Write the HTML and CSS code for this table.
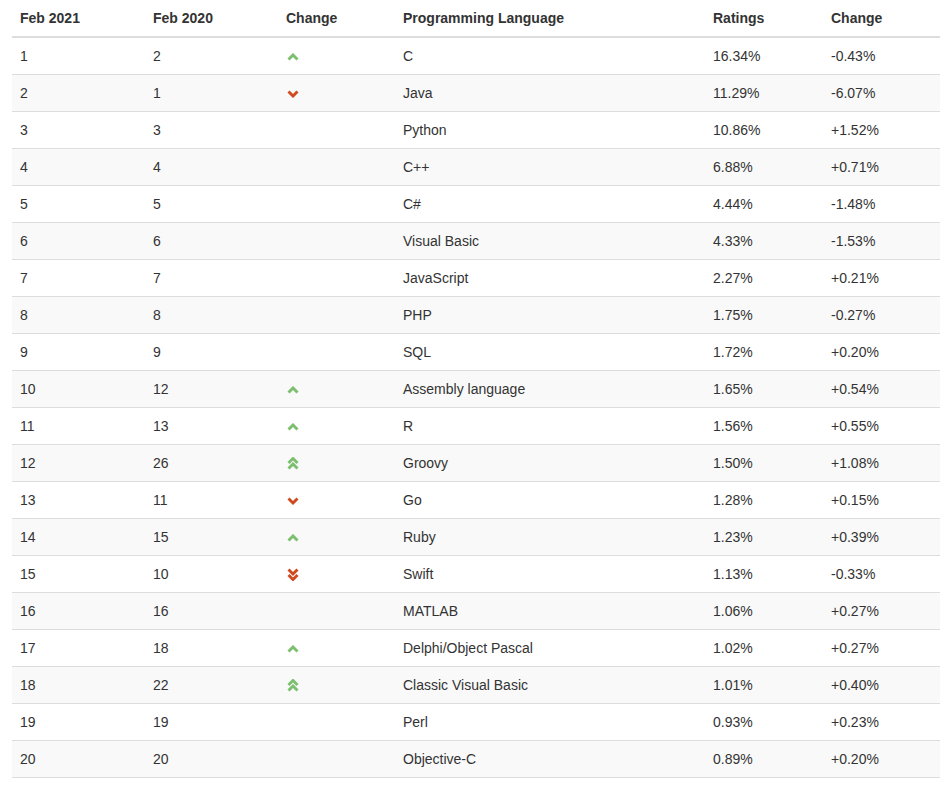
FILE: index.html
```html
<!DOCTYPE html>
<html>
<head>
<meta charset="utf-8">
<link rel="stylesheet" href="styles.css">
</head>
<body>
<div class="wrap">
<table class="rank">
<colgroup>
<col class="c1"><col class="c2"><col class="c3"><col class="c4"><col class="c5"><col class="c6">
</colgroup>
<thead>
<tr><th>Feb 2021</th><th>Feb 2020</th><th>Change</th><th>Programming Language</th><th>Ratings</th><th>Change</th></tr>
</thead>
<tbody>
<tr><td>1</td><td>2</td><td><svg class="ic up" width="12" height="8" viewBox="0 0 12 8"><polyline points="1.5,6.5 6,2 10.5,6.5"/></svg></td><td>C</td><td>16.34%</td><td>-0.43%</td></tr>
<tr><td>2</td><td>1</td><td><svg class="ic down" width="12" height="8" viewBox="0 0 12 8"><polyline points="1.5,1.5 6,6 10.5,1.5"/></svg></td><td>Java</td><td>11.29%</td><td>-6.07%</td></tr>
<tr><td>3</td><td>3</td><td></td><td>Python</td><td>10.86%</td><td>+1.52%</td></tr>
<tr><td>4</td><td>4</td><td></td><td>C++</td><td>6.88%</td><td>+0.71%</td></tr>
<tr><td>5</td><td>5</td><td></td><td>C#</td><td>4.44%</td><td>-1.48%</td></tr>
<tr><td>6</td><td>6</td><td></td><td>Visual Basic</td><td>4.33%</td><td>-1.53%</td></tr>
<tr><td>7</td><td>7</td><td></td><td>JavaScript</td><td>2.27%</td><td>+0.21%</td></tr>
<tr><td>8</td><td>8</td><td></td><td>PHP</td><td>1.75%</td><td>-0.27%</td></tr>
<tr><td>9</td><td>9</td><td></td><td>SQL</td><td>1.72%</td><td>+0.20%</td></tr>
<tr><td>10</td><td>12</td><td><svg class="ic up" width="12" height="8" viewBox="0 0 12 8"><polyline points="1.5,6.5 6,2 10.5,6.5"/></svg></td><td>Assembly language</td><td>1.65%</td><td>+0.54%</td></tr>
<tr><td>11</td><td>13</td><td><svg class="ic up" width="12" height="8" viewBox="0 0 12 8"><polyline points="1.5,6.5 6,2 10.5,6.5"/></svg></td><td>R</td><td>1.56%</td><td>+0.55%</td></tr>
<tr><td>12</td><td>26</td><td><svg class="ic up dbl" width="12" height="13" viewBox="0 0 12 13"><polyline points="1.5,6 6,1.5 10.5,6"/><polyline points="1.5,11.5 6,7 10.5,11.5"/></svg></td><td>Groovy</td><td>1.50%</td><td>+1.08%</td></tr>
<tr><td>13</td><td>11</td><td><svg class="ic down" width="12" height="8" viewBox="0 0 12 8"><polyline points="1.5,1.5 6,6 10.5,1.5"/></svg></td><td>Go</td><td>1.28%</td><td>+0.15%</td></tr>
<tr><td>14</td><td>15</td><td><svg class="ic up" width="12" height="8" viewBox="0 0 12 8"><polyline points="1.5,6.5 6,2 10.5,6.5"/></svg></td><td>Ruby</td><td>1.23%</td><td>+0.39%</td></tr>
<tr><td>15</td><td>10</td><td><svg class="ic down dbl" width="12" height="13" viewBox="0 0 12 13"><polyline points="1.5,1.5 6,6 10.5,1.5"/><polyline points="1.5,7 6,11.5 10.5,7"/></svg></td><td>Swift</td><td>1.13%</td><td>-0.33%</td></tr>
<tr><td>16</td><td>16</td><td></td><td>MATLAB</td><td>1.06%</td><td>+0.27%</td></tr>
<tr><td>17</td><td>18</td><td><svg class="ic up" width="12" height="8" viewBox="0 0 12 8"><polyline points="1.5,6.5 6,2 10.5,6.5"/></svg></td><td>Delphi/Object Pascal</td><td>1.02%</td><td>+0.27%</td></tr>
<tr><td>18</td><td>22</td><td><svg class="ic up dbl" width="12" height="13" viewBox="0 0 12 13"><polyline points="1.5,6 6,1.5 10.5,6"/><polyline points="1.5,11.5 6,7 10.5,11.5"/></svg></td><td>Classic Visual Basic</td><td>1.01%</td><td>+0.40%</td></tr>
<tr><td>19</td><td>19</td><td></td><td>Perl</td><td>0.93%</td><td>+0.23%</td></tr>
<tr><td>20</td><td>20</td><td></td><td>Objective-C</td><td>0.89%</td><td>+0.20%</td></tr>
</tbody>
</table>
</div>
</body>
</html>
```

FILE: styles.css
```css
html, body {
  margin: 0;
  padding: 0;
  background: #fff;
}
body {
  font-family: "Liberation Sans", Arial, sans-serif;
  font-size: 14px;
  line-height: 20px;
  color: #333;
}
.wrap {
  padding: 0 10px 0 12px;
}
.rank {
  width: 928px;
  border-collapse: collapse;
  border-spacing: 0;
  table-layout: fixed;
}
.c1 { width: 133px; }
.c2 { width: 133px; }
.c3 { width: 117px; }
.c4 { width: 310px; }
.c5 { width: 118px; }
.c6 { width: 117px; }
.rank th {
  text-align: left;
  font-weight: bold;
  padding: 8px;
  border-bottom: 2px solid #ddd;
  vertical-align: bottom;
}
.rank td {
  padding: 8px;
  border-top: 1px solid #ddd;
  vertical-align: top;
  height: 20px;
}
.rank tbody tr:last-child td {
  border-bottom: 1px solid #ddd;
}
.rank tbody tr:nth-child(even) td {
  background: #f9f9f9;
}
.ic {
  display: block;
  margin: 0 0 0 1px;
  position: relative;
  top: 7px;
  fill: none;
  stroke-width: 2.9;
  stroke-linecap: butt;
  stroke-linejoin: miter;
}
.ic.up { stroke: #7cbf6e; }
.ic.down { stroke: #cf4a1e; }
.ic.dbl { top: 4px; }
```
